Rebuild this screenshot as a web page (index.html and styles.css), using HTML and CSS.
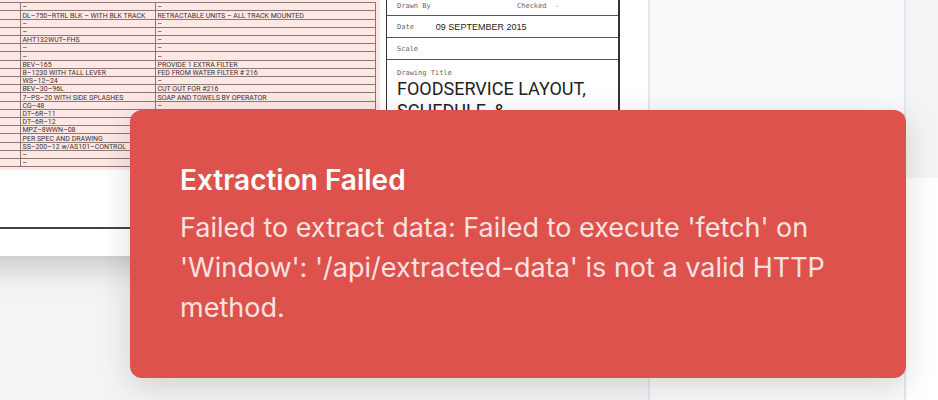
FILE: index.html
```html
<!DOCTYPE html>
<html lang="en">
<head>
<meta charset="utf-8">
<title>Drawing viewer</title>
<link rel="stylesheet" href="styles.css">
</head>
<body>
<div class="app">
  <main class="viewer">
    <div class="sheet">
      <div class="frame">
        <div class="schedule">
          <table class="items">
            <colgroup><col class="col-mark"><col class="col-model"><col></colgroup>
            <tbody>
              <tr><td></td><td>–</td><td>–</td></tr>
              <tr><td></td><td>DL–750–RTRL BLK – WITH BLK TRACK</td><td>RETRACTABLE UNITS – ALL TRACK MOUNTED</td></tr>
              <tr><td></td><td>–</td><td>–</td></tr>
              <tr><td></td><td>–</td><td>–</td></tr>
              <tr><td></td><td>AHT132WUT–FHS</td><td>–</td></tr>
              <tr><td></td><td>–</td><td>–</td></tr>
              <tr><td></td><td>–</td><td>–</td></tr>
              <tr><td></td><td>BEV–165</td><td>PROVIDE 1 EXTRA FILTER</td></tr>
              <tr><td></td><td>B–1230 WITH TALL LEVER</td><td>FED FROM WATER FILTER # 216</td></tr>
              <tr><td></td><td>WS–12–24</td><td>–</td></tr>
              <tr><td></td><td>BEV–30–96L</td><td>CUT OUT FOR #216</td></tr>
              <tr><td></td><td>7–PS–20 WITH SIDE SPLASHES</td><td>SOAP AND TOWELS BY OPERATOR</td></tr>
              <tr><td></td><td>CG–48</td><td>–</td></tr>
              <tr><td></td><td>DT–6R–11</td><td></td></tr>
              <tr><td></td><td>DT–6R–12</td><td></td></tr>
              <tr><td></td><td>MPZ–8WWN–08</td><td></td></tr>
              <tr><td></td><td>PER SPEC AND DRAWING</td><td></td></tr>
              <tr><td></td><td>SS–200–12 w/AS101–CONTROL</td><td></td></tr>
              <tr><td></td><td>–</td><td></td></tr>
              <tr><td></td><td>–</td><td></td></tr>
            </tbody>
          </table>
        </div>
        <section class="title-block">
          <div class="field signoff"><span class="label">Drawn By</span><span class="label">Checked</span><span class="label">-</span></div>
          <div class="field"><span class="label">Date</span><span class="date">09 SEPTEMBER 2015</span></div>
          <div class="field"><span class="label">Scale</span></div>
          <div class="drawing">
            <span class="label">Drawing Title</span>
            <h1 class="drawing-title">FOODSERVICE LAYOUT,<br>SCHEDULE, &amp;</h1>
          </div>
        </section>
      </div>
    </div>
  </main>
  <aside class="panel"></aside>
  <div class="gutter"></div>
</div>
<div class="toast" role="alert">
  <h2 class="toast-title">Extraction Failed</h2>
  <p class="toast-text">Failed to extract data: Failed to execute 'fetch' on 'Window': '/api/extracted-data' is not a valid HTTP method.</p>
</div>
</body>
</html>
```
FILE: styles.css
```css
* {
  box-sizing: border-box;
}

body {
  margin: 0;
  height: 100vh;
  overflow: hidden;
  position: relative;
  background: #fff;
  font-family: Inter, "Liberation Sans", sans-serif;
}

.app {
  display: grid;
  grid-template-columns: 1fr 258px 32px;
  height: 100%;
}

.viewer {
  overflow: hidden;
  background: #f3f4f6;
}

/* The sheet runs on past the left edge of the viewer. */
.sheet {
  margin-left: -40px;
  padding-left: 40px;
  background: #fff;
  padding-bottom: 27px;
  box-shadow: 0 8px 32px rgba(0, 0, 0, 0.22);
}

.frame {
  display: flex;
  justify-content: space-between;
  height: 229px;
  padding-right: 28px;
  border-bottom: 2px solid #444;
}

.schedule {
  width: 380px;
  height: 170px;
  padding-top: 2px;
  padding-right: 4px;
  background: #fde8e6;
}

.items {
  width: 100%;
  table-layout: fixed;
  border-collapse: collapse;
  color: #43302f;
  font: 7px/6px Roboto, "Liberation Sans", sans-serif;
}

.col-mark {
  width: 20px;
}

.col-model {
  width: 135px;
}

.items td {
  height: 8px;
  padding: 1px 0 0 2px;
  border: 1px solid #8d7775;
  border-left-color: #5e4a49;
  white-space: nowrap;
}

.items tr:nth-child(5n + 2) td {
  height: 9px;
}

.items td:first-child {
  border-left: 0;
}

.title-block {
  width: 234px;
  border: 1px solid #333;
  border-width: 0 2px 0 1px;
}

.field {
  display: flex;
  align-items: center;
  height: 22px;
  padding: 0 10px;
  border-bottom: 1px solid #555;
}

.signoff {
  display: grid;
  grid-template-columns: 120px 38px 1fr;
  height: 16px;
  padding-bottom: 3px;
}

.label {
  color: #666;
  font: 7px/10px "DejaVu Sans Mono", monospace;
}

.date {
  margin-left: 22px;
  color: #222;
  font: 9px/12px "Liberation Sans", sans-serif;
}

.drawing {
  display: flex;
  flex-direction: column;
  padding: 8px 10px;
}

.drawing-title {
  margin: 0;
  color: #222;
  font: 18px/22px Roboto, "Liberation Sans", sans-serif;
  white-space: nowrap;
}

.panel {
  background: #f9fafc;
  border: 2px solid #e5e7eb;
  border-width: 0 2px;
}

.gutter {
  height: 178px;
  background: #f3f4f6;
}

.toast {
  position: absolute;
  top: 110px;
  left: 130px;
  right: 32px;
  padding: 50px;
  border-radius: 12px;
  background: #dd524c;
  box-shadow: 0 8px 32px rgba(0, 0, 0, 0.15);
}

.toast-title {
  margin: 0 0 8px;
  color: #fff;
  font-size: 28px;
  font-weight: 600;
  line-height: 40px;
}

.toast-text {
  margin: 0;
  color: #f9e2e1;
  font-size: 27px;
  line-height: 40px;
}
```
